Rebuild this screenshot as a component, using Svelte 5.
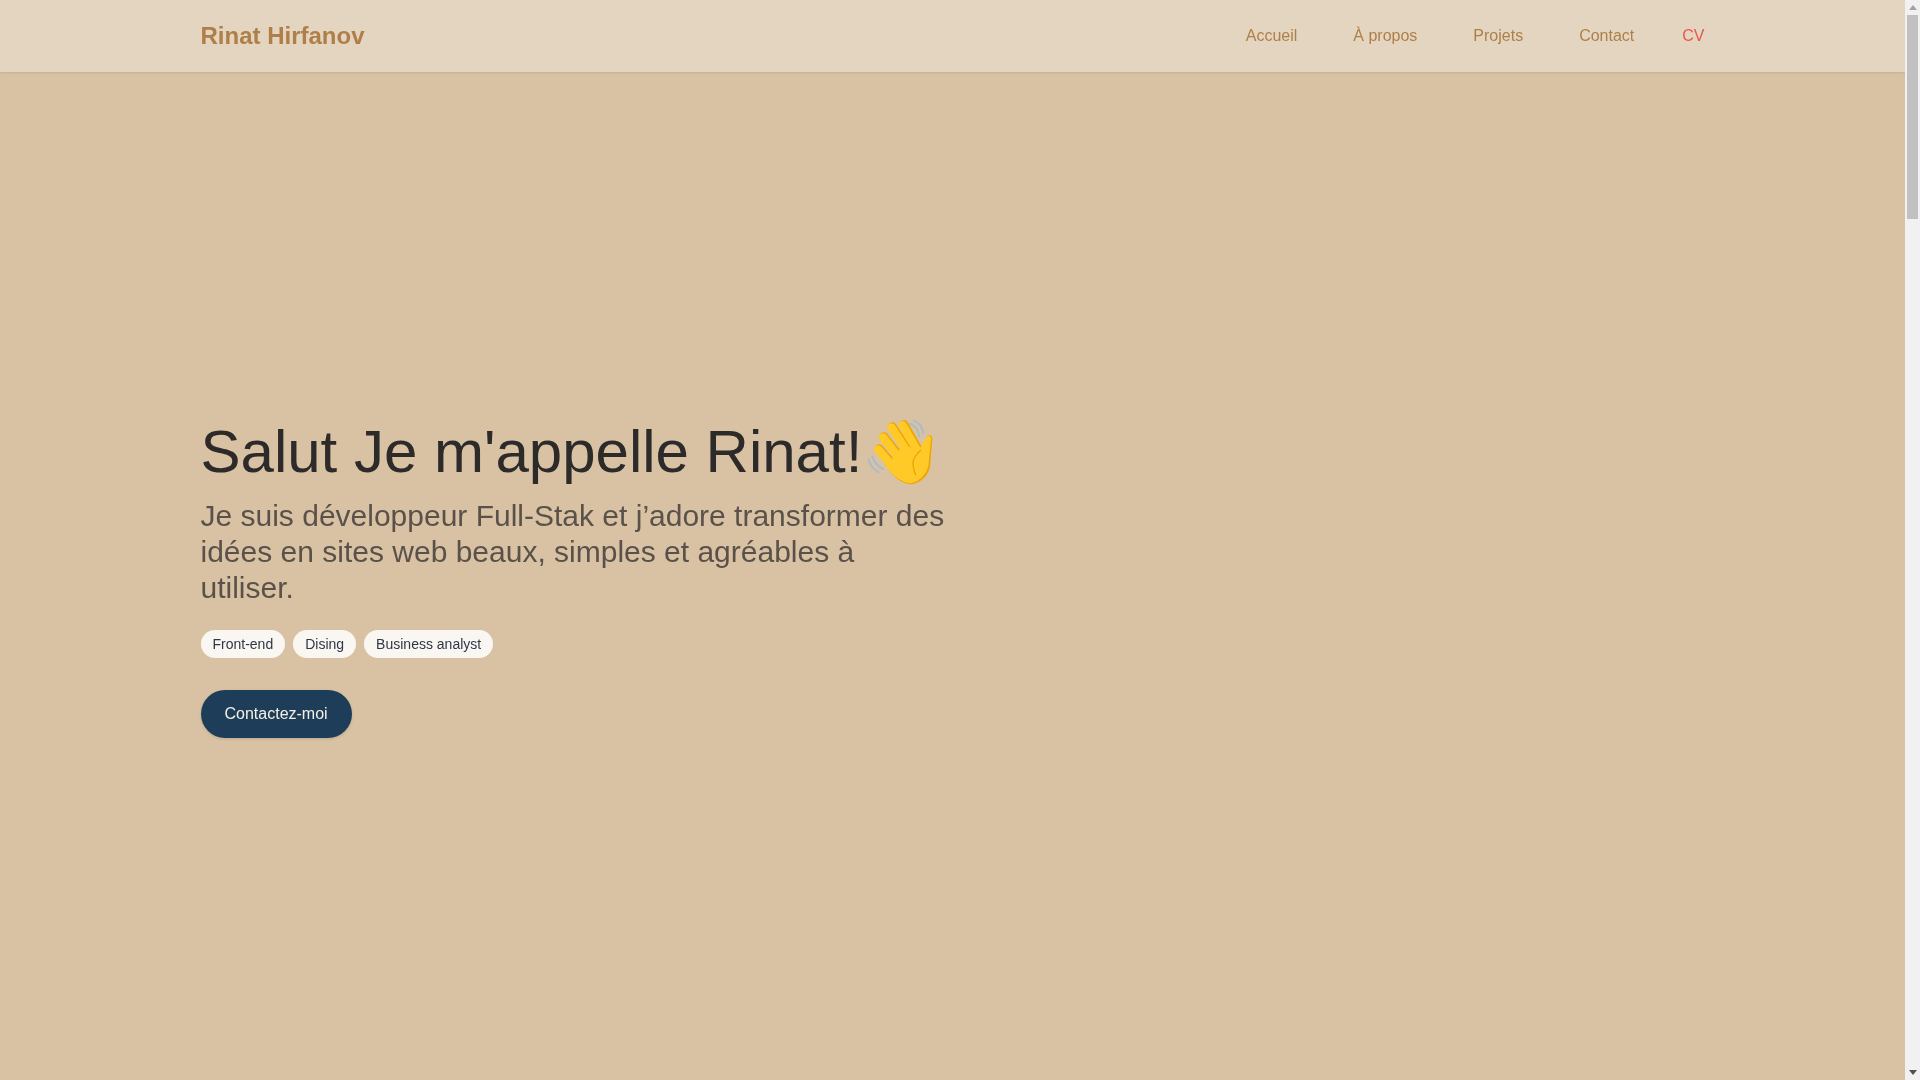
<script>
  const links = ['Accueil', 'À propos', 'Projets', 'Contact'];
  const tags = ['Front-end', 'Dising', 'Business analyst'];
</script>

<div class="window">
  <div class="page">
    <header class="header">
      <div class="bar">
        <span class="logo">Rinat Hirfanov</span>
        <nav class="nav">
          {#each links as l}
            <a href="#top" class="link">{l}</a>
          {/each}
          <a href="#top" class="cv">CV</a>
        </nav>
      </div>
    </header>
    <main class="hero">
      <div class="copy">
        <h1>
          <span>Salut Je m'appelle Rinat!</span>
          <svg class="wave" viewBox="80 47 216 216" aria-label="👋">
            <g fill="none" stroke="#a9bccb" stroke-width="6" stroke-linecap="round">
              <path d="M85 178Q90 202 115 216" />
              <path d="M96 168Q102 192 128 206" />
              <path d="M209 70Q232 78 237 108" />
              <path d="M220 61Q245 70 249 98" />
            </g>
            <g stroke="#eda600" stroke-width="27" stroke-linecap="round">
              <line x1="116" y1="145" x2="168" y2="205" />
              <line x1="131" y1="109" x2="182" y2="175" />
              <line x1="156" y1="79" x2="208" y2="160" />
              <line x1="191" y1="73" x2="240" y2="158" />
            </g>
            <path fill="#eda600" d="M262 108Q272 100 276 114L269 200Q258 242 215 252Q175 253 135 195L200 130L238 150Z" />
            <g stroke="#ffca28" stroke-width="25" stroke-linecap="round">
              <line x1="113" y1="147" x2="165" y2="207" />
              <line x1="128" y1="111" x2="179" y2="177" />
              <line x1="153" y1="81" x2="205" y2="162" />
              <line x1="187" y1="75" x2="236" y2="160" />
            </g>
            <path fill="#ffca28" d="M256 114Q268 100 272 114L264 198Q253 238 213 249Q176 249 136 198L190 135L236 150Z" />
            <path fill="none" stroke="#eda600" stroke-width="4" stroke-linecap="round" d="M241 150Q216 172 218 192Q219 208 226 224" />
          </svg>
        </h1>
        <p class="lead">Je suis développeur Full-Stak et j’adore transformer des idées en sites web beaux, simples et agréables à utiliser.</p>
        <div class="tags">
          {#each tags as t}<span class="tag">{t}</span>{/each}
        </div>
        <button class="cta">Contactez-moi</button>
      </div>
    </main>
  </div>
  <div class="scrollbar">
    <span class="arrow up"></span>
    <div class="track"><div class="thumb"></div></div>
    <span class="arrow down"></span>
  </div>
</div>

<style>
  :global(body) {
    font-family: "Liberation Sans", Arial, sans-serif;
    overflow: hidden;
  }
  .window {
    display: flex;
    height: 1080px;
  }
  .page {
    flex: 1;
    min-width: 0;
    background: #d8c2a3;
  }
  .header {
    background: #e3d5bf;
    height: 72px;
    box-shadow: 0 1px 2px rgba(0, 0, 0, 0.1);
  }
  .bar {
    height: 100%;
    max-width: 1504px;
    margin: 0 auto;
    display: flex;
    align-items: center;
    justify-content: space-between;
    will-change: opacity;
  }
  .logo {
    font-size: 24px;
    font-weight: 700;
    color: #af7f4a;
  }
  .nav {
    display: flex;
    align-items: center;
    gap: 56px;
  }
  .link {
    font-size: 16px;
    color: #af7f4a;
    text-decoration: none;
  }
  .cv {
    font-size: 16px;
    color: #e8574f;
    text-decoration: none;
    margin-left: -8px;
  }
  .hero {
    height: 1008px;
    max-width: 1504px;
    margin: 0 auto;
    padding-top: 1px;
    box-sizing: border-box;
    display: flex;
    align-items: center;
  }
  .copy {
    width: 50%;
    will-change: opacity;
  }
  h1 {
    margin: 0;
    display: flex;
    align-items: center;
    font-size: 60px;
    line-height: 72px;
    font-weight: 400;
    color: #2d2a2a;
  }
  .wave {
    width: 72px;
    height: 72px;
    margin-left: 5px;
    flex: none;
  }
  .lead {
    margin: 10px 0 0;
    font-size: 30px;
    line-height: 36px;
    color: #5a524a;
  }
  .tags {
    display: flex;
    gap: 8px;
    margin-top: 24px;
  }
  .tag {
    background: #faf7f2;
    color: #2d3748;
    font-size: 14px;
    line-height: 20px;
    padding: 4px 12px;
    border-radius: 14px;
  }
  .cta {
    margin-top: 32px;
    display: block;
    height: 48px;
    padding: 0 24px;
    border: 0;
    border-radius: 24px;
    background: #1e3d59;
    color: #f5f0e6;
    font: 16px "Liberation Sans", Arial, sans-serif;
    box-shadow: 0 1px 3px rgba(0, 0, 0, 0.12);
  }
  .scrollbar {
    width: 15px;
    flex: none;
    background: #f1f1f1;
    display: flex;
    flex-direction: column;
    align-items: center;
    padding-top: 5px;
    padding-bottom: 5px;
    box-sizing: border-box;
  }
  .arrow {
    width: 0;
    height: 0;
    border-left: 4px solid transparent;
    border-right: 4px solid transparent;
    flex: none;
  }
  .up {
    border-bottom: 5px solid #a3a3a3;
  }
  .down {
    border-top: 5px solid #505050;
  }
  .track {
    flex: 1;
    width: 100%;
    padding: 5px 2px 0;
    box-sizing: border-box;
  }
  .thumb {
    height: 204px;
    background: #c1c1c1;
  }
</style>
